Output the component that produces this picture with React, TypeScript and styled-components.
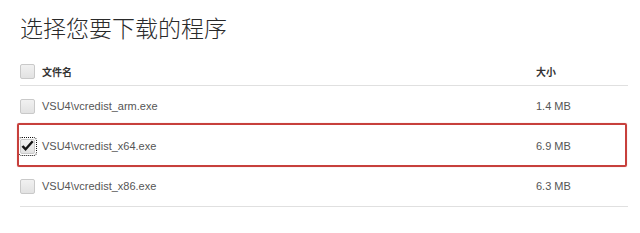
import React from "react";
import styled, { createGlobalStyle } from "styled-components";

const Global = createGlobalStyle`
  html, body { margin: 0; padding: 0; background: #ffffff; }
  body { font-family: "Liberation Sans", "Noto Sans CJK SC", sans-serif; }
`;

const Page = styled.div`
  width: 640px;
  height: 233px;
  padding: 0 12px 0 20px;
  box-sizing: border-box;
  overflow: hidden;
`;

const Title = styled.h1`
  margin: 0;
  padding-top: 14px;
  font-family: "Noto Sans CJK SC", sans-serif;
  font-weight: 300;
  font-size: 23px;
  line-height: 27px;
  color: #2a2a2a;
`;

const Table = styled.div`
  margin-top: 16px;
  display: flex;
  flex-direction: column;
  border-bottom: 1px solid #e0e0e0;
`;

const Row = styled.div<{ $header?: boolean }>`
  position: relative;
  display: grid;
  grid-template-columns: 22px 1fr 92px;
  align-items: center;
  height: ${(p) => (p.$header ? 28 : 40)}px;
  border-bottom: ${(p) => (p.$header ? "1px solid #e0e0e0" : "none")};
  font-size: ${(p) => (p.$header ? "10px" : "11px")};
  font-weight: ${(p) => (p.$header ? 700 : 400)};
  color: ${(p) => (p.$header ? "#333333" : "#555555")};
`;

const Cell = styled.span<{ $cjk?: boolean }>`
  font-family: ${(p) =>
    p.$cjk ? '"Noto Sans CJK SC", sans-serif' : '"Liberation Sans", "Noto Sans CJK SC", sans-serif'};
  white-space: nowrap;
`;

const Box = styled.span<{ $checked?: boolean }>`
  position: relative;
  display: flex;
  align-items: center;
  justify-content: center;
  width: 15px;
  height: 15px;
  box-sizing: border-box;
  border: 1px solid #c9c9c9;
  border-radius: 2px;
  background: linear-gradient(#f1f1f1, #e2e2e2);
  outline: ${(p) => (p.$checked ? "1px dotted #111" : "none")};
  outline-offset: 1px;
`;

const Highlight = styled.span`
  position: absolute;
  left: -3px;
  right: 1px;
  top: -3px;
  bottom: -1px;
  border: 2px solid #c7403c;
  border-radius: 2px;
  box-shadow: 0 0 1px rgba(199, 64, 60, 0.5);
  pointer-events: none;
`;

const Check = () => (
  <svg width="13" height="12" viewBox="0 0 13 12" style={{ marginLeft: -1 }}>
    <path d="M0.5 6.8 L4.6 11 L12.6 2 L10.8 0.6 L4.6 7.6 L2.4 5.2 Z" fill="#151515" />
  </svg>
);

const files = [
  { name: "VSU4\\vcredist_arm.exe", size: "1.4 MB", checked: false },
  { name: "VSU4\\vcredist_x64.exe", size: "6.9 MB", checked: true },
  { name: "VSU4\\vcredist_x86.exe", size: "6.3 MB", checked: false },
];

export default function App() {
  return (
    <>
      <Global />
      <Page>
        <Title>选择您要下载的程序</Title>
        <Table>
          <Row $header>
            <Box />
            <Cell $cjk>文件名</Cell>
            <Cell $cjk>大小</Cell>
          </Row>
          {files.map((f) => (
            <Row key={f.name}>
              <Box $checked={f.checked}>{f.checked && <Check />}</Box>
              <Cell>{f.name}</Cell>
              <Cell>{f.size}</Cell>
              {f.checked && <Highlight />}
            </Row>
          ))}
        </Table>
      </Page>
    </>
  );
}
